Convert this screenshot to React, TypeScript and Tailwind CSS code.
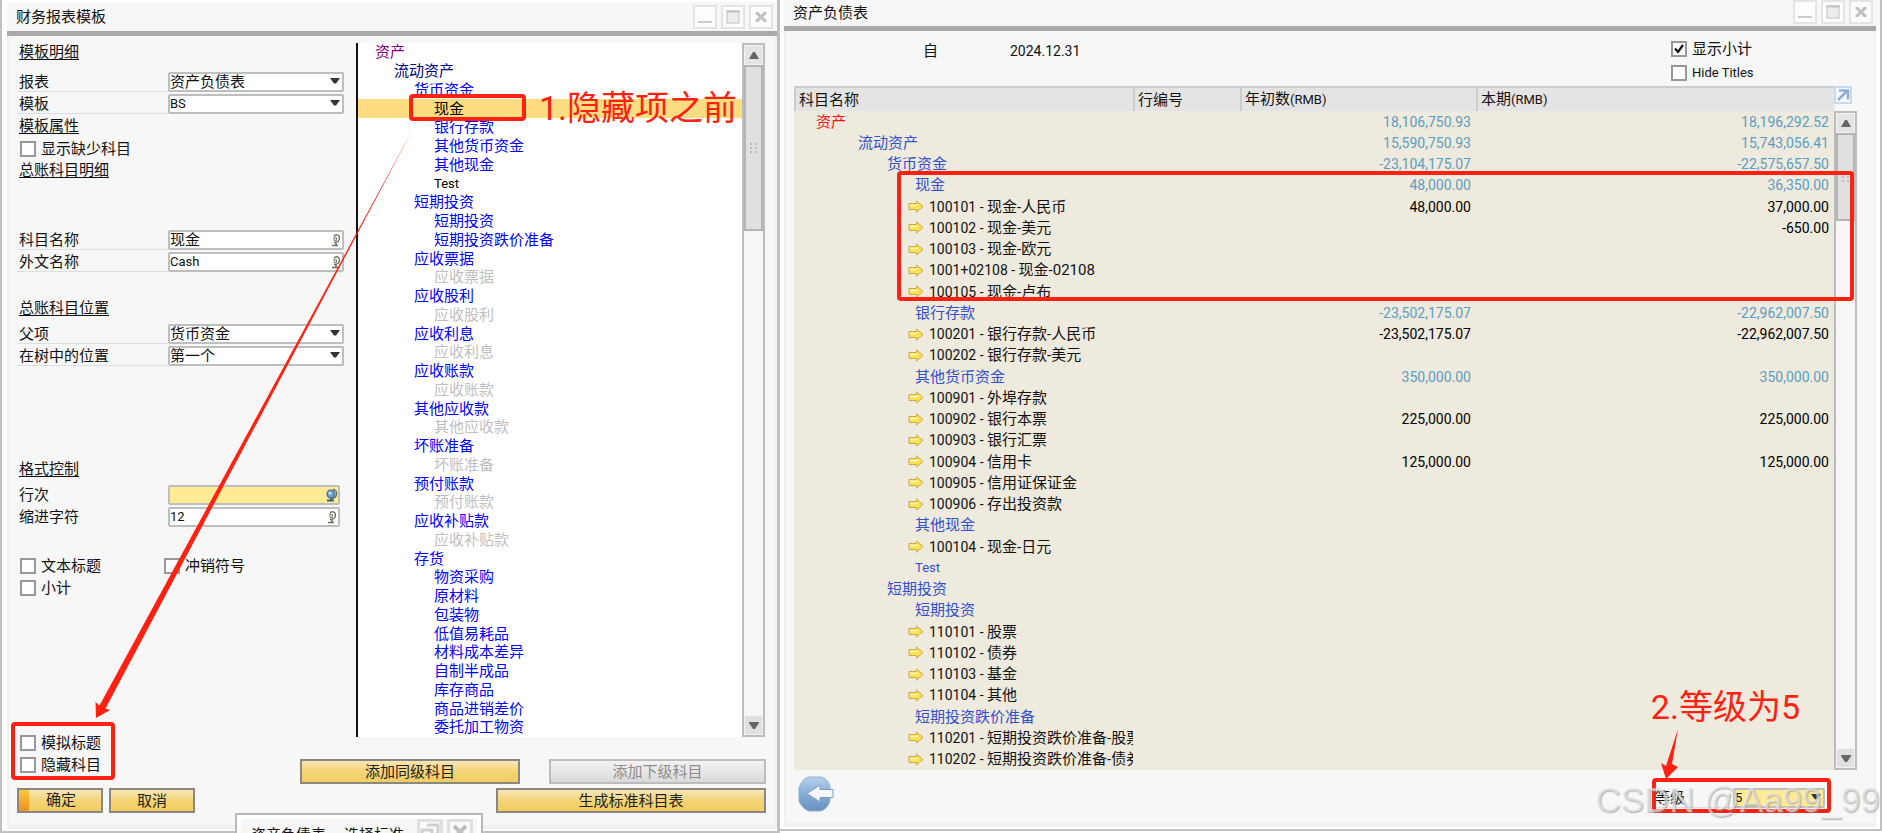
import type { ReactNode } from "react";

type Tone = "purple" | "navy" | "blue" | "black" | "gray";

type TreeItem = { name: string; level: 0 | 1 | 2 | 3; tone: Tone; selected?: boolean };

const treeItems: TreeItem[] = [
  { name: "资产", level: 0, tone: "purple" },
  { name: "流动资产", level: 1, tone: "navy" },
  { name: "货币资金", level: 2, tone: "blue" },
  { name: "现金", level: 3, tone: "black", selected: true },
  { name: "银行存款", level: 3, tone: "blue" },
  { name: "其他货币资金", level: 3, tone: "blue" },
  { name: "其他现金", level: 3, tone: "blue" },
  { name: "Test", level: 3, tone: "black" },
  { name: "短期投资", level: 2, tone: "blue" },
  { name: "短期投资", level: 3, tone: "blue" },
  { name: "短期投资跌价准备", level: 3, tone: "blue" },
  { name: "应收票据", level: 2, tone: "blue" },
  { name: "应收票据", level: 3, tone: "gray" },
  { name: "应收股利", level: 2, tone: "blue" },
  { name: "应收股利", level: 3, tone: "gray" },
  { name: "应收利息", level: 2, tone: "blue" },
  { name: "应收利息", level: 3, tone: "gray" },
  { name: "应收账款", level: 2, tone: "blue" },
  { name: "应收账款", level: 3, tone: "gray" },
  { name: "其他应收款", level: 2, tone: "blue" },
  { name: "其他应收款", level: 3, tone: "gray" },
  { name: "坏账准备", level: 2, tone: "blue" },
  { name: "坏账准备", level: 3, tone: "gray" },
  { name: "预付账款", level: 2, tone: "blue" },
  { name: "预付账款", level: 3, tone: "gray" },
  { name: "应收补贴款", level: 2, tone: "blue" },
  { name: "应收补贴款", level: 3, tone: "gray" },
  { name: "存货", level: 2, tone: "blue" },
  { name: "物资采购", level: 3, tone: "blue" },
  { name: "原材料", level: 3, tone: "blue" },
  { name: "包装物", level: 3, tone: "blue" },
  { name: "低值易耗品", level: 3, tone: "blue" },
  { name: "材料成本差异", level: 3, tone: "blue" },
  { name: "自制半成品", level: 3, tone: "blue" },
  { name: "库存商品", level: 3, tone: "blue" },
  { name: "商品进销差价", level: 3, tone: "blue" },
  { name: "委托加工物资", level: 3, tone: "blue" },
];

const treeIndent = ["pl-[17px]", "pl-9", "pl-14", "pl-[76px]"];

const toneClass: Record<Tone, string> = {
  purple: "text-[#800080]",
  navy: "text-[#000080]",
  blue: "text-[#0000ff]",
  black: "text-black",
  gray: "text-[#bfbfbf]",
};

// Rows with a code are accounts; the others are titles placed by level.
type ReportRow = {
  code?: string;
  name: string;
  level?: 0 | 1 | 2 | 3;
  opening?: string;
  current?: string;
};

const reportRows: ReportRow[] = [
  { name: "资产", level: 0, opening: "18,106,750.93", current: "18,196,292.52" },
  { name: "流动资产", level: 1, opening: "15,590,750.93", current: "15,743,056.41" },
  { name: "货币资金", level: 2, opening: "-23,104,175.07", current: "-22,575,657.50" },
  { name: "现金", level: 3, opening: "48,000.00", current: "36,350.00" },
  { code: "100101", name: "现金-人民币", opening: "48,000.00", current: "37,000.00" },
  { code: "100102", name: "现金-美元", current: "-650.00" },
  { code: "100103", name: "现金-欧元" },
  { code: "1001+02108", name: "现金-02108" },
  { code: "100105", name: "现金-卢布" },
  { name: "银行存款", level: 3, opening: "-23,502,175.07", current: "-22,962,007.50" },
  { code: "100201", name: "银行存款-人民币", opening: "-23,502,175.07", current: "-22,962,007.50" },
  { code: "100202", name: "银行存款-美元" },
  { name: "其他货币资金", level: 3, opening: "350,000.00", current: "350,000.00" },
  { code: "100901", name: "外埠存款" },
  { code: "100902", name: "银行本票", opening: "225,000.00", current: "225,000.00" },
  { code: "100903", name: "银行汇票" },
  { code: "100904", name: "信用卡", opening: "125,000.00", current: "125,000.00" },
  { code: "100905", name: "信用证保证金" },
  { code: "100906", name: "存出投资款" },
  { name: "其他现金", level: 3 },
  { code: "100104", name: "现金-日元" },
  { name: "Test", level: 3 },
  { name: "短期投资", level: 2 },
  { name: "短期投资", level: 3 },
  { code: "110101", name: "股票" },
  { code: "110102", name: "债券" },
  { code: "110103", name: "基金" },
  { code: "110104", name: "其他" },
  { name: "短期投资跌价准备", level: 3 },
  { code: "110201", name: "短期投资跌价准备-股票" },
  { code: "110202", name: "短期投资跌价准备-债券" },
];

const reportIndent = ["pl-[22px]", "pl-16", "pl-[93px]", "pl-[121px]"];

function isLatin(text: string) {
  return /^[\x20-\x7e]+$/.test(text);
}

function WindowButtons() {
  const box =
    "flex h-6 w-6 items-center justify-center border-2 border-[#e4e4e4] bg-[#fdfdfd]";
  return (
    <div className="flex gap-1">
      <button type="button" aria-label="最小化" className={box}>
        <svg width="20" height="20" viewBox="0 0 20 20">
          <path d="M3 15h14" stroke="#cccccc" strokeWidth="2" />
        </svg>
      </button>
      <button type="button" aria-label="最大化" className={box}>
        <svg width="20" height="20" viewBox="0 0 20 20">
          <rect x="4" y="4" width="12" height="12" fill="#ededed" stroke="#c0c0c0" />
          <path d="M3.500 4.500h13" stroke="#c0c0c0" strokeWidth="2" />
        </svg>
      </button>
      <button type="button" aria-label="关闭" className={box}>
        <svg width="20" height="20" viewBox="0 0 20 20">
          <path
            d="M4.500 5h3L10 8l2.500-3h3v2L12 10l3.500 3v2h-3L10 12l-2.500 3h-3v-2L8 10 4.500 7z"
            fill="#c0c0c0"
          />
        </svg>
      </button>
    </div>
  );
}

function GlobeIcon({ active }: { active?: boolean }) {
  if (active) {
    return (
      <svg width="13" height="14" viewBox="0 0 13 14" fill="none">
        <path d="M8 1c5 1.500 5 8.500-1 10" stroke="#6b6b50" strokeWidth="1.200" />
        <circle cx="6" cy="6" r="4" fill="#6f9fce" stroke="#3c6a9c" strokeWidth="1.200" />
        <circle cx="5" cy="5" r="1.500" fill="#cfe2f4" />
        <path d="M6 10v2M2 12.500h7" stroke="#3c5f86" strokeWidth="2" />
      </svg>
    );
  }
  return (
    <svg width="12" height="14" viewBox="0 0 12 14" fill="none">
      <path
        d="M4 3.500C5 1 9.500 1 9.500 5c0 3-2 4.500-5.500 4.500"
        stroke="#6b6b60"
        strokeWidth="1.300"
      />
      <path d="M4 4.500h2.500v3H4z" fill="#dcdcd2" stroke="#8b8b80" />
      <path d="M6 9.500v3M2 12.500h6" stroke="#6b6b60" strokeWidth="1.500" />
    </svg>
  );
}

function SelectBox({ id, value, yellow }: { id: string; value: string; yellow?: boolean }) {
  return (
    <div className="relative h-5 w-full">
      <select
        id={id}
        defaultValue={value}
        className={`block h-5 w-full appearance-none rounded-xs border-2 border-[#bcbfbe] leading-4 outline-none ${
          yellow ? "bg-[#ffeb94]" : "bg-white"
        } ${isLatin(value) ? "text-[13px]" : ""}`}
      >
        <option>{value}</option>
      </select>
      <svg
        className="pointer-events-none absolute right-1 top-1.5 h-1.5 w-2.5"
        viewBox="0 0 10 6"
      >
        <path d="M0 0h10L6 5.500H4z" fill="#333333" />
      </svg>
    </div>
  );
}

function TextBox({ id, value, active }: { id: string; value: string; active?: boolean }) {
  return (
    <div
      className={`flex h-5 w-full items-center rounded-xs border-2 border-[#bcbfbe] ${
        active ? "bg-[#ffeb94]" : "bg-white"
      }`}
    >
      <input
        id={id}
        type="text"
        defaultValue={value}
        className={`h-4 w-0 flex-1 bg-transparent leading-4 outline-none ${
          isLatin(value) ? "text-[13px]" : ""
        }`}
      />
      <GlobeIcon active={active} />
    </div>
  );
}

function FieldRow({
  id,
  label,
  plain,
  children,
}: {
  id: string;
  label: string;
  plain?: boolean;
  children: ReactNode;
}) {
  return (
    <div className="flex h-[22px] items-start">
      <label
        htmlFor={id}
        className={`h-5 w-[151px] shrink-0 border-b pl-0.5 leading-5 ${
          plain ? "border-transparent" : "border-[#dadfe3]"
        }`}
      >
        {label}
      </label>
      <div className={plain ? "w-[172px]" : "w-44"}>{children}</div>
    </div>
  );
}

function Heading({ children }: { children: ReactNode }) {
  return (
    <h3 className="h-5 pl-0.5 leading-5 underline decoration-1 underline-offset-2">
      {children}
    </h3>
  );
}

function CheckRow({ id, label, checked }: { id: string; label: string; checked?: boolean }) {
  return (
    <div className="flex h-[22px] items-center gap-[5px]">
      <span className="relative h-4 w-4 shrink-0">
        <input
          id={id}
          type="checkbox"
          defaultChecked={checked}
          className="peer block h-4 w-4 appearance-none border-2 border-[#96999b] bg-white"
        />
        <svg
          className="pointer-events-none absolute inset-0 hidden h-4 w-4 peer-checked:block"
          viewBox="0 0 16 16"
        >
          <path d="M4 7.500l3 3.500 5-7" fill="none" stroke="#111111" strokeWidth="2.200" />
        </svg>
      </span>
      <label htmlFor={id} className={isLatin(label) ? "text-[13px]" : ""}>
        {label}
      </label>
    </div>
  );
}

function ActionButton({
  children,
  className,
  disabled,
}: {
  children: ReactNode;
  className: string;
  disabled?: boolean;
}) {
  return (
    <button
      type="button"
      disabled={disabled}
      className={`flex h-[25px] items-center justify-center border-2 leading-5 ${
        disabled
          ? "border-[#bdbdbd] bg-linear-to-b from-[#f3f3f3] to-[#dadada] text-[#8c8c8c]"
          : "border-[#8a8880] bg-linear-to-b from-[#f8e6b4] via-[#f4d477] to-[#f1cd61] text-[#222222]"
      } ${className}`}
    >
      {children}
    </button>
  );
}

function ScrollBar({ thumb }: { thumb: string }) {
  return (
    <div className="flex w-[23px] flex-1 flex-col border-2 border-[#bcbcbc] bg-[#f7f7f7]">
      <div className="flex h-5 shrink-0 items-center justify-center border border-[#f3f3f3] bg-[#e4e4e4]">
        <svg width="10" height="7" viewBox="0 0 10 7">
          <path d="M4 0h2l4 7H0z" fill="#666666" />
        </svg>
      </div>
      <div
        className={`flex items-center justify-center border-2 border-[#b5b5b5] bg-[#e0e0e0] ${thumb}`}
      >
        <svg width="9" height="12" viewBox="0 0 9 12" fill="#bdbdbd">
          <path d="M1 1h2v2H1zM6 1h2v2H6zM1 5h2v2H1zM6 5h2v2H6zM1 9h2v2H1zM6 9h2v2H6z" />
        </svg>
      </div>
      <div className="mt-auto flex h-5 shrink-0 items-center justify-center border border-[#f3f3f3] bg-[#e0e0e0]">
        <svg width="10" height="7" viewBox="0 0 10 7">
          <path d="M0 0h10v1L6 7H4L0 1z" fill="#666666" />
        </svg>
      </div>
    </div>
  );
}

function TemplateForm() {
  return (
    <form className="flex w-[347px] shrink-0 flex-col pl-2 pt-1.5">
      <Heading>模板明细</Heading>
      <div className="mt-2.5">
        <FieldRow id="report" label="报表">
          <SelectBox id="report" value="资产负债表" />
        </FieldRow>
        <FieldRow id="template" label="模板">
          <SelectBox id="template" value="BS" />
        </FieldRow>
      </div>
      <Heading>模板属性</Heading>
      <div className="pl-[3px] pt-0.5">
        <CheckRow id="show-missing" label="显示缺少科目" />
      </div>
      <Heading>总账科目明细</Heading>
      <div className="mt-[50px]">
        <FieldRow id="account-name" label="科目名称">
          <TextBox id="account-name" value="现金" />
        </FieldRow>
        <FieldRow id="foreign-name" label="外文名称">
          <TextBox id="foreign-name" value="Cash" />
        </FieldRow>
      </div>
      <div className="mt-6">
        <Heading>总账科目位置</Heading>
      </div>
      <div className="mt-1.5">
        <FieldRow id="parent" label="父项">
          <SelectBox id="parent" value="货币资金" />
        </FieldRow>
        <FieldRow id="position" label="在树中的位置">
          <SelectBox id="position" value="第一个" />
        </FieldRow>
      </div>
      <div className="mt-[91px]">
        <Heading>格式控制</Heading>
      </div>
      <div className="mt-1.5">
        <FieldRow id="line-no" label="行次" plain>
          <TextBox id="line-no" value="" active />
        </FieldRow>
        <FieldRow id="indent" label="缩进字符" plain>
          <TextBox id="indent" value="12" />
        </FieldRow>
      </div>
      <div className="mt-[26px] grid grid-cols-[144px_1fr] pl-[3px]">
        <CheckRow id="text-title" label="文本标题" />
        <CheckRow id="reversal" label="冲销符号" />
        <CheckRow id="subtotal" label="小计" />
      </div>
      <div className="mt-auto pl-[3px]">
        <CheckRow id="dummy-title" label="模拟标题" />
        <CheckRow id="hide-account" label="隐藏科目" />
      </div>
      <div className="mb-3 mt-3 flex gap-1.5">
        <button
          type="button"
          className="flex h-[25px] w-[86px] border-2 border-[#8a8880] bg-linear-to-b from-[#f8e6b4] via-[#f4d477] to-[#f1cd61] leading-5 text-[#222222]"
        >
          <span className="h-full w-2.5 bg-linear-to-b from-[#f9c83c] to-[#ee8f1c]" />
          <span className="flex-1 pr-2">确定</span>
        </button>
        <ActionButton className="w-[86px]">取消</ActionButton>
      </div>
    </form>
  );
}

function AccountTree() {
  return (
    <div className="flex min-w-0 flex-1 flex-col pr-[9px] pt-[7px]">
      <div className="flex min-h-0 flex-1 pr-px">
        <ul className="flex flex-1 flex-col border-l-2 border-[#111111] bg-white">
          {treeItems.map((item, i) => (
            <li
              key={i}
              className={`flex min-h-0 flex-1 items-center whitespace-nowrap leading-[18px] ${
                treeIndent[item.level]
              } ${toneClass[item.tone]} ${item.selected ? "bg-[#fddc82]" : ""} ${
                isLatin(item.name) ? "text-[13px]" : ""
              }`}
            >
              {item.name}
            </li>
          ))}
        </ul>
        <div className="flex flex-col">
          <ScrollBar thumb="h-[166px]" />
        </div>
      </div>
      <div className="mb-3 mt-[22px] flex flex-col items-end gap-1">
        <div className="flex gap-[29px]">
          <ActionButton className="w-[220px]">添加同级科目</ActionButton>
          <ActionButton className="w-[217px]" disabled>
            添加下级科目
          </ActionButton>
        </div>
        <ActionButton className="w-[270px]">生成标准科目表</ActionButton>
      </div>
    </div>
  );
}

function TemplateWindow() {
  return (
    <section className="relative flex w-[780px] shrink-0 flex-col border-b-2 border-l-2 border-r-3 border-[#c0c0c0] bg-white pb-0.5 pl-[5px] pt-0.5">
      <header className="flex h-[29px] shrink-0 items-center justify-between bg-[#f7f7f7] pl-[9px] pr-1">
        <h2 className="leading-6">财务报表模板</h2>
        <WindowButtons />
      </header>
      <div className="h-[5px] shrink-0 bg-[#a9a9a9]" />
      <div className="flex min-h-0 flex-1 border-x-2 border-b-4 border-[#f0f0f0] bg-[#f7f7f7]">
        <TemplateForm />
        <AccountTree />
      </div>

      <div className="absolute left-[407px] top-[94px] h-[27px] w-[117px] rounded-sm border-4 border-[#ff2112]" />
      <p className="absolute left-[537px] top-[91px] whitespace-nowrap text-[34px] leading-[34px] text-[#ff2112]">
        1.隐藏项之前
      </p>
      <svg className="absolute left-0 top-0 h-[833px] w-[500px]" viewBox="2 0 500 833">
        <path d="M413 129L105.500 708.500L110 710L96 718L95.500 702L99.500 705.500z" fill="#ff2112" />
      </svg>
      <div className="absolute bottom-[51px] left-[9px] h-[58px] w-[104px] rounded-sm border-4 border-[#ff2112]" />
    </section>
  );
}

// Top edge of the selection-criteria window that sits below the template one.
function CriteriaWindow() {
  return (
    <section className="absolute -bottom-4 left-[235px] h-9 w-[248px] border-2 border-[#b8b8b8] bg-white p-1">
      <header className="flex h-full items-start justify-between bg-[#f7f7f7] pl-2.5 pr-1">
        <h2 className="mt-1 flex gap-[18px] whitespace-nowrap leading-6">
          <span>资产负债表</span>
          <span>选择标准</span>
        </h2>
        <div className="flex gap-1">
          <button
            type="button"
            aria-label="还原"
            className="h-[26px] w-[26px] border-3 border-[#e0e0e0] bg-[#fafafa]"
          >
            <svg width="20" height="20" viewBox="0 0 20 20">
              <path d="M7 3h11v9h-3M2 8h10v9H2z" fill="none" stroke="#d0d0d0" strokeWidth="3" />
            </svg>
          </button>
          <button
            type="button"
            aria-label="关闭"
            className="h-[26px] w-[26px] border-3 border-[#e0e0e0] bg-[#fafafa]"
          >
            <svg width="20" height="20" viewBox="0 0 20 20">
              <path d="M4 4l12 12M16 4L4 16" stroke="#c0c0c0" strokeWidth="4" />
            </svg>
          </button>
        </div>
      </header>
    </section>
  );
}

function LinkArrow() {
  return (
    <svg width="16" height="13" viewBox="0 0 16 13" className="shrink-0">
      <path
        d="M1 3.500h7.500V1L15 6.500L8.500 12V9.500H1z"
        fill="#ffe14d"
        stroke="#c9a94a"
        strokeWidth="1"
      />
      <path d="M2 5.500h8" stroke="#fff6bd" strokeWidth="1.500" />
    </svg>
  );
}

function ReportTable() {
  const head =
    "border-l-2 border-t-2 border-[#cccccc] bg-[#e4e4e4] p-0 pl-[3px] text-left font-normal";
  return (
    <table className="h-full w-full table-fixed border-separate border-spacing-0 bg-[#eeeadd] leading-5">
      <colgroup>
        <col className="w-[339px]" />
        <col className="w-[107px]" />
        <col className="w-[236px]" />
        <col />
      </colgroup>
      <thead>
        <tr className="h-[25px]">
          <th className={head}>科目名称</th>
          <th className={head}>行编号</th>
          <th className={head}>
            年初数<span className="text-[13px]">(RMB)</span>
          </th>
          <th className={head}>
            本期<span className="text-[13px]">(RMB)</span>
          </th>
        </tr>
      </thead>
      <tbody>
        {reportRows.map((row, i) => {
          const amount = `p-0 pr-[5px] text-right text-sm leading-5 ${
            row.code ? "text-black" : "text-[#5c9dc2]"
          }`;
          return (
            <tr key={i}>
              <td className="overflow-hidden whitespace-nowrap p-0">
                {row.code ? (
                  <div className="flex h-5 items-center gap-[5px] pl-[114px]">
                    <LinkArrow />
                    <span>
                      <span className="text-sm leading-5">{row.code} - </span>
                      {row.name}
                    </span>
                  </div>
                ) : (
                  <div
                    className={`h-5 ${reportIndent[row.level ?? 0]} ${
                      row.level === 0 ? "text-[#ff1010]" : "text-[#3350cc]"
                    } ${isLatin(row.name) ? "text-[13px]" : ""}`}
                  >
                    {row.name}
                  </div>
                )}
              </td>
              <td className="p-0" />
              <td className={amount}>{row.opening}</td>
              <td className={amount}>{row.current}</td>
            </tr>
          );
        })}
      </tbody>
    </table>
  );
}

function BackIcon() {
  return (
    <svg width="36" height="36" viewBox="0 0 36 36">
      <defs>
        <linearGradient id="back-fill" x1="0" y1="0" x2="0" y2="1">
          <stop offset="0" stopColor="#b9d0ea" />
          <stop offset="0.500" stopColor="#86aedb" />
          <stop offset="1" stopColor="#6690bd" />
        </linearGradient>
      </defs>
      <path
        d="M11 1h12c5 1 8 5 9 10v13c-1 5-4 9-9 11H11c-5-2-8-5-10-10V12C3 6 6 2 11 1z"
        fill="url(#back-fill)"
        stroke="#8fb0d3"
        strokeLinejoin="round"
      />
      <path
        d="M9 17.500L22 9v4.500h13v8H22V26z"
        fill="#f4f7fb"
        stroke="#7f9fc2"
        strokeLinejoin="round"
      />
    </svg>
  );
}

function ReportWindow() {
  return (
    <section className="relative mb-0.5 flex min-w-0 flex-1 flex-col border-b-2 border-r-2 border-[#c0c0c0] bg-white pb-0.5 pl-1">
      <header className="flex h-[26px] shrink-0 items-start justify-between bg-[#f7f7f7] pl-[9px] pr-[7px]">
        <h2 className="leading-[26px]">资产负债表</h2>
        <WindowButtons />
      </header>
      <div className="mr-1 h-[5px] shrink-0 bg-[#a9a9a9]" />
      <div className="mr-1 flex min-h-0 flex-1 flex-col border-x-2 border-b-4 border-[#f0f0f0] bg-[#f7f7f7] pl-2">
        <div className="flex h-[55px] shrink-0 justify-between">
          <p className="flex pl-[129px] pt-2.5 leading-5">
            <span className="w-[87px]">自</span>
            <time className="text-sm leading-5">2024.12.31</time>
          </p>
          <div className="flex w-[203px] flex-col gap-0.5 pt-[7px]">
            <CheckRow id="show-subtotal" label="显示小计" checked />
            <CheckRow id="hide-titles" label="Hide Titles" />
          </div>
        </div>
        <div className="flex min-h-0 flex-1 pr-[17px]">
          <div className="h-full min-w-0 flex-1">
            <ReportTable />
          </div>
          <div className="flex flex-col">
            <div className="h-[25px]">
              <button
                type="button"
                aria-label="展开表格"
                className="block h-[18px] w-[18px] border-2 border-[#c6daee] bg-[#f4f8fc]"
              >
                <svg width="14" height="14" viewBox="0 0 14 14">
                  <path
                    d="M2 12L11 3M3 2.500h9v9"
                    fill="none"
                    stroke="#93aed6"
                    strokeWidth="2.500"
                  />
                </svg>
              </button>
            </div>
            <ScrollBar thumb="h-[88px]" />
          </div>
        </div>
        <footer className="flex h-[53px] shrink-0 items-start justify-between pl-1 pr-[49px] pt-1.5">
          <button type="button" aria-label="返回">
            <BackIcon />
          </button>
          <div className="flex items-center pt-3">
            <label
              htmlFor="level"
              className="h-5 w-[78px] border-b border-[#dadfe3] leading-5"
            >
              等级
            </label>
            <div className="w-[92px]">
              <SelectBox id="level" value="5" yellow />
            </div>
          </div>
        </footer>
      </div>

      <div className="absolute left-[117px] right-[26px] top-[171px] h-[130px] rounded-sm border-4 border-[#ff2112]" />
      <p className="absolute bottom-[105px] right-[80px] whitespace-nowrap text-[34px] leading-[34px] text-[#ff2112]">
        2.等级为5
      </p>
      <svg
        className="absolute bottom-[49px] right-[200px] h-[52px] w-[22px]"
        viewBox="0 0 22 52"
      >
        <path d="M20 1L14 36L20 39L8 51L3 35L8 38z" fill="#ff2112" />
      </svg>
      <div className="absolute bottom-4 right-[49px] h-[35px] w-[179px] rounded-sm border-4 border-[#ff2112]" />
      <p className="absolute bottom-2.5 right-0 whitespace-nowrap font-['Liberation_Sans'] text-[35px] leading-[38px] text-[#ececec]/60 [text-shadow:1px_1px_1px_#8a8a8a99]">
        CSDN @Aa99_99
      </p>
    </section>
  );
}

export default function App() {
  return (
    <main className="relative flex h-screen overflow-hidden bg-white font-[Roboto,'Noto_Sans_CJK_SC',sans-serif] text-[15px] text-[#111111]">
      <TemplateWindow />
      <ReportWindow />
      <CriteriaWindow />
    </main>
  );
}
